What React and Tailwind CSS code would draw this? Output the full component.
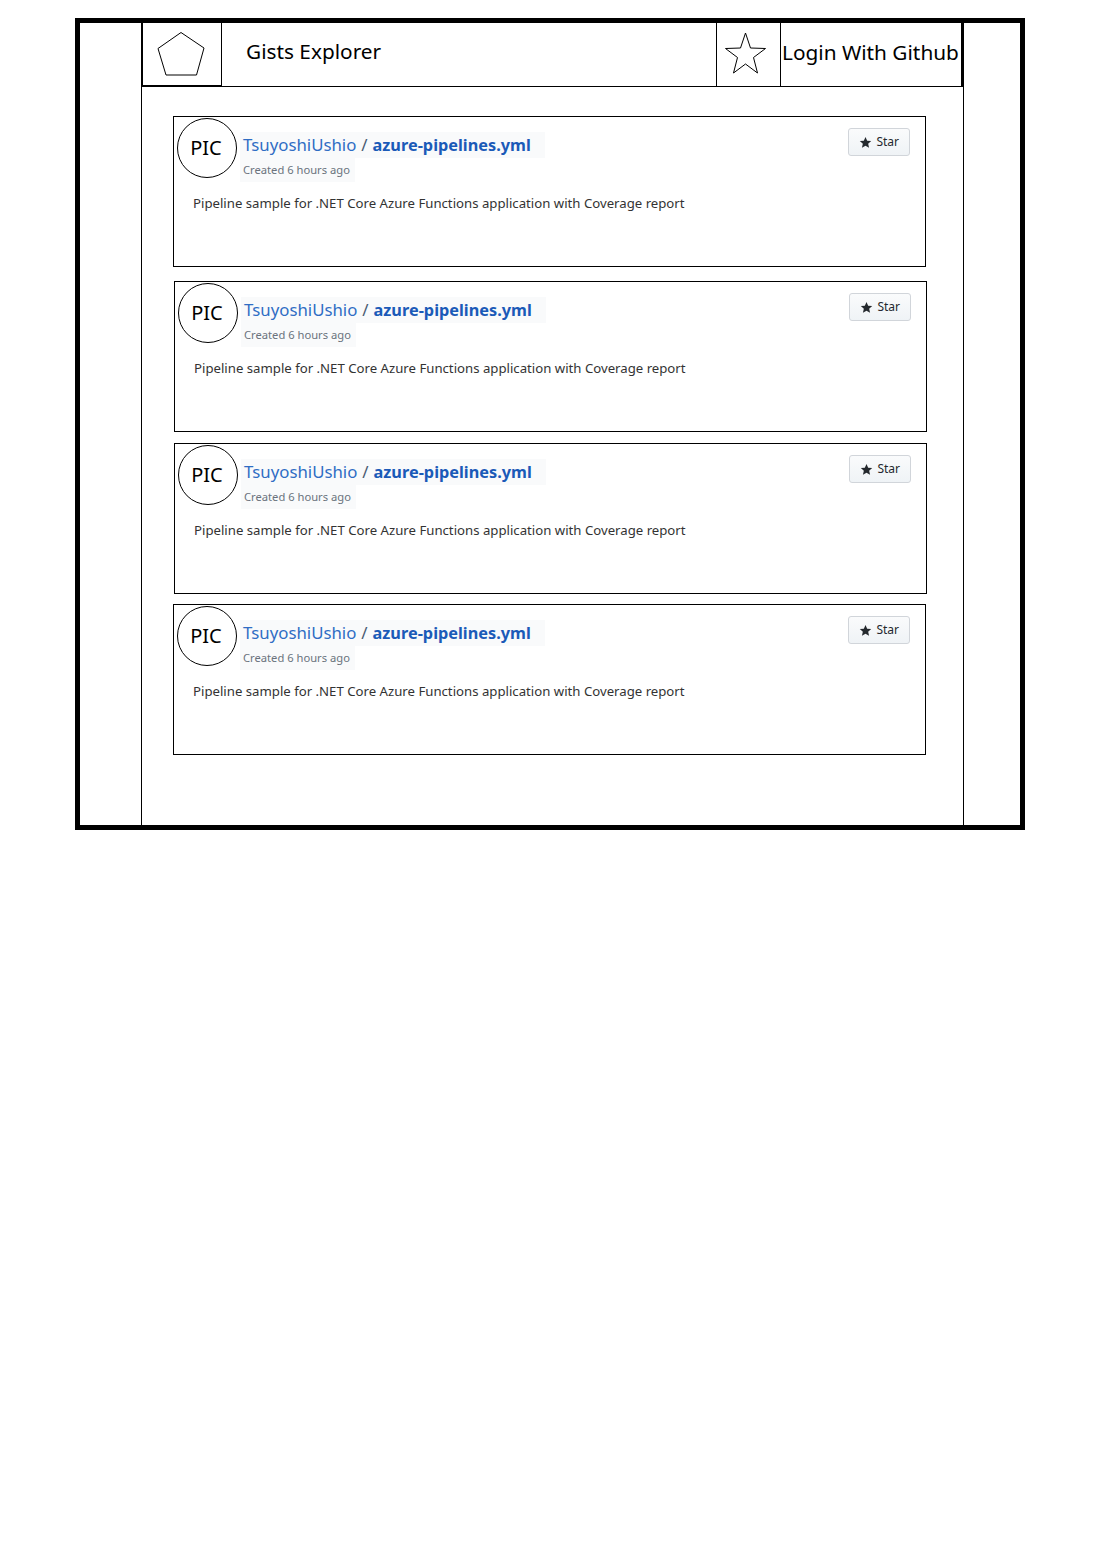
import React from "react";

const FONT = { fontFamily: '"Noto Sans", "Open Sans", Arial, sans-serif' };

function Pentagon() {
  return (
    <svg width="78" height="61" viewBox="143 23 78 61" className="block">
      <polygon
        points="181,31.5 204,47 196.5,74 166,74 158,47.5"
        fill="none"
        stroke="#000"
        strokeWidth="1"
      />
    </svg>
  );
}

function OutlineStar() {
  return (
    <svg width="63" height="63" viewBox="717 23 63 63" className="block">
      <polygon
        points="745.5,33 750.5,48 765.5,48.5 753.5,57.5 757.5,73 745.5,64 733.5,73 737.5,57.5 725.5,48.5 740.5,48"
        fill="none"
        stroke="#000"
        strokeWidth="1"
      />
    </svg>
  );
}

function SolidStar() {
  return (
    <svg width="13" height="13" viewBox="0 0 24 24" className="block">
      <path
        d="M12 1.8l3.1 6.9 7.4.7-5.6 5 1.7 7.4L12 17.9l-6.6 3.9 1.7-7.4-5.6-5 7.4-.7z"
        fill="#24292e"
      />
    </svg>
  );
}

function Card({ className }) {
  return (
    <div className={`w-[753px] h-[151px] border border-black flex flex-col ${className}`}>
      <div className="flex items-start">
        <div className="ml-[3px] mt-[1px] w-[60px] h-[60px] shrink-0 rounded-full border border-black flex items-center justify-center">
          <span className="text-[20px] text-black leading-none pr-[2px]">PIC</span>
        </div>
        <div className="ml-[3px] mt-[15px] flex flex-col items-start">
          <div className="bg-[#f9fafb] h-[26px] pl-[3px] pr-[14px] flex items-center whitespace-nowrap leading-none">
            <span className="text-[#2f6dc4] text-[16.8px]">TsuyoshiUshio</span>
            <span className="text-[#4a5a72] text-[16.8px] px-[5px]">/</span>
            <span className="text-[#1b5ab8] text-[16.3px] font-bold">azure-pipelines.yml</span>
          </div>
          <div className="bg-[#f9fafb] h-[24px] pl-[3px] pr-[5px] flex items-center whitespace-nowrap text-[11.2px] text-[#6a737d] leading-none">
            Created 6 hours ago
          </div>
        </div>
        <div className="ml-auto mt-[11px] mr-[15px] h-[28px] px-[10px] flex items-center gap-[4px] rounded-[3px] border border-[#d1d5da] bg-gradient-to-b from-[#fafbfc] to-[#eff3f6] text-[12px] text-[#24292e]">
          <SolidStar />
          <span>Star</span>
        </div>
      </div>
      <div className="ml-[19px] mt-[11px] text-[13.2px] leading-[20px] text-[#333333] whitespace-nowrap">
        Pipeline sample for .NET Core Azure Functions application with Coverage report
      </div>
    </div>
  );
}

export default function App() {
  return (
    <div className="w-[1114px] h-[1554px] bg-white" style={FONT}>
      <div className="ml-[75px] mt-[18px] inline-block w-[950px] h-[812px] border-[5px] border-black align-top">
        <div className="ml-[61px] w-[823px] h-full flex flex-col">
          <div className="flex h-[64px] items-stretch">
            <div className="w-[81px] border-l-2 border-b-2 border-r border-black flex items-center justify-center">
              <Pentagon />
            </div>
            <div className="flex-1 border-b border-black flex items-center pl-[24px] pb-[6px]">
              <span className="text-[20.8px] text-black leading-none">Gists Explorer</span>
            </div>
            <div className="w-[65px] border-l border-r border-b border-black flex items-start justify-center">
              <OutlineStar />
            </div>
            <div className="w-[183px] border-b border-r-[3px] border-black flex items-center pl-[1px] pb-[4px] overflow-hidden">
              <span className="text-[20.8px] text-black leading-none whitespace-nowrap">Login With Github</span>
            </div>
          </div>
          <div className="flex-1 border-l border-r border-black pt-[29px]">
            <Card className="ml-[31px]" />
            <Card className="ml-[32px] mt-[14px]" />
            <Card className="ml-[32px] mt-[11px]" />
            <Card className="ml-[31px] mt-[10px]" />
          </div>
        </div>
      </div>
    </div>
  );
}
